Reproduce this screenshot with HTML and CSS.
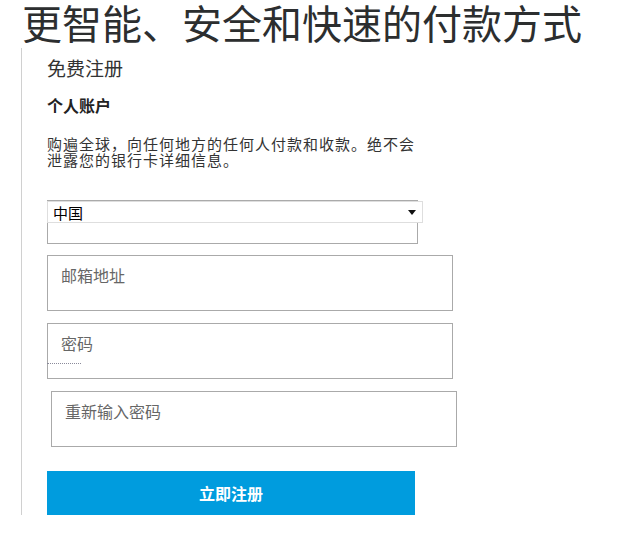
FILE: index.html
```html
<!DOCTYPE html>
<html lang="zh-CN">
<head>
    <meta charset="UTF-8">
    <meta name="viewport" content="width=device-width, initial-scale=1.0">
    <title>免费注册</title>
    <link rel="stylesheet" href="styles.css">
</head>
<body>
    <!-- Nagłówek -->
    <h1 class="headline">更智能、安全和快速的付款方式</h1>

    <!-- Formularz rejestracji -->
    <div class="signup">
        <h2 class="signup-title">免费注册</h2>
        <h3 class="account-type">个人账户</h3>
        <p class="intro">购遍全球，向任何地方的任何人付款和收款。绝不会<br>泄露您的银行卡详细信息。</p>

        <div class="country-box">
            <div class="country-select">
                <select id="country">
                    <option value="CN">中国</option>
                </select>
            </div>
        </div>

        <input type="text" class="field" id="email" placeholder="邮箱地址">
        <div class="password-wrap">
            <input type="password" class="field" id="password" placeholder="密码">
        </div>
        <input type="password" class="field field-shifted" id="confirm" placeholder="重新输入密码">

        <button class="submit">立即注册</button>
    </div>
</body>
</html>
```

FILE: styles.css
```css
body {
    margin: 0;
    font-family: "Noto Sans CJK SC", "Noto Sans", sans-serif;
    color: #333;
    background: #fff;
}
.headline {
    margin: 0 0 0 22px;
    font-size: 40px;
    line-height: 44px;
    font-weight: normal;
    color: #2c2e2f;
    white-space: nowrap;
}
.signup {
    margin: 4px 0 0 21px;
    padding: 11px 0 0 25px;
    border-left: 1px solid #d0d0d0;
}
.signup-title {
    margin: 0;
    font-size: 19px;
    line-height: 18px;
    font-weight: normal;
    color: #333;
}
.account-type {
    margin: 20px 0 0;
    font-size: 16px;
    line-height: 16px;
    font-weight: bold;
    color: #222;
}
.intro {
    margin: 23px 0 0;
    font-size: 15px;
    line-height: 16px;
    letter-spacing: 1px;
    white-space: nowrap;
    color: #333;
}
.country-box {
    margin-top: 32px;
    width: 371px;
    height: 44px;
    box-sizing: border-box;
    border: 1px solid #aaa;
}
.country-select {
    position: relative;
    margin-left: -1px;
    width: 376px;
}
.country-select select {
    display: block;
    width: 100%;
    height: 22px;
    margin: 0;
    padding: 0 5px;
    border: 1px solid #dedede;
    border-radius: 0;
    background: #fff;
    font-family: "Noto Sans CJK SC", sans-serif;
    font-size: 15px;
    color: #000;
    appearance: none;
    -webkit-appearance: none;
    outline: none;
}
.country-select::after {
    content: "";
    position: absolute;
    right: 7px;
    top: 9px;
    border-left: 4px solid transparent;
    border-right: 4px solid transparent;
    border-top: 5px solid #111;
}
.field {
    display: block;
    box-sizing: border-box;
    width: 406px;
    height: 56px;
    margin: 12px 0 0;
    padding: 11px 13px 27px;
    border: 1px solid #aaa;
    border-radius: 0;
    font-family: "Noto Sans CJK SC", sans-serif;
    font-size: 16px;
    line-height: 16px;
    color: #333;
    outline: none;
}
.field::placeholder {
    color: #666;
}
#email {
    margin-top: 11px;
}
.password-wrap {
    position: relative;
}
.password-wrap::after {
    content: "";
    position: absolute;
    left: 0;
    bottom: 15px;
    width: 34px;
    border-top: 1px dotted #8a8a9a;
}
.field-shifted {
    margin-left: 4px;
}
.submit {
    display: block;
    width: 368px;
    height: 44px;
    margin: 24px 0 0;
    padding: 0;
    border: none;
    background-color: #009cde;
    color: #fff;
    font-family: "Noto Sans CJK SC", sans-serif;
    font-size: 16px;
    font-weight: bold;
    cursor: pointer;
}
```
